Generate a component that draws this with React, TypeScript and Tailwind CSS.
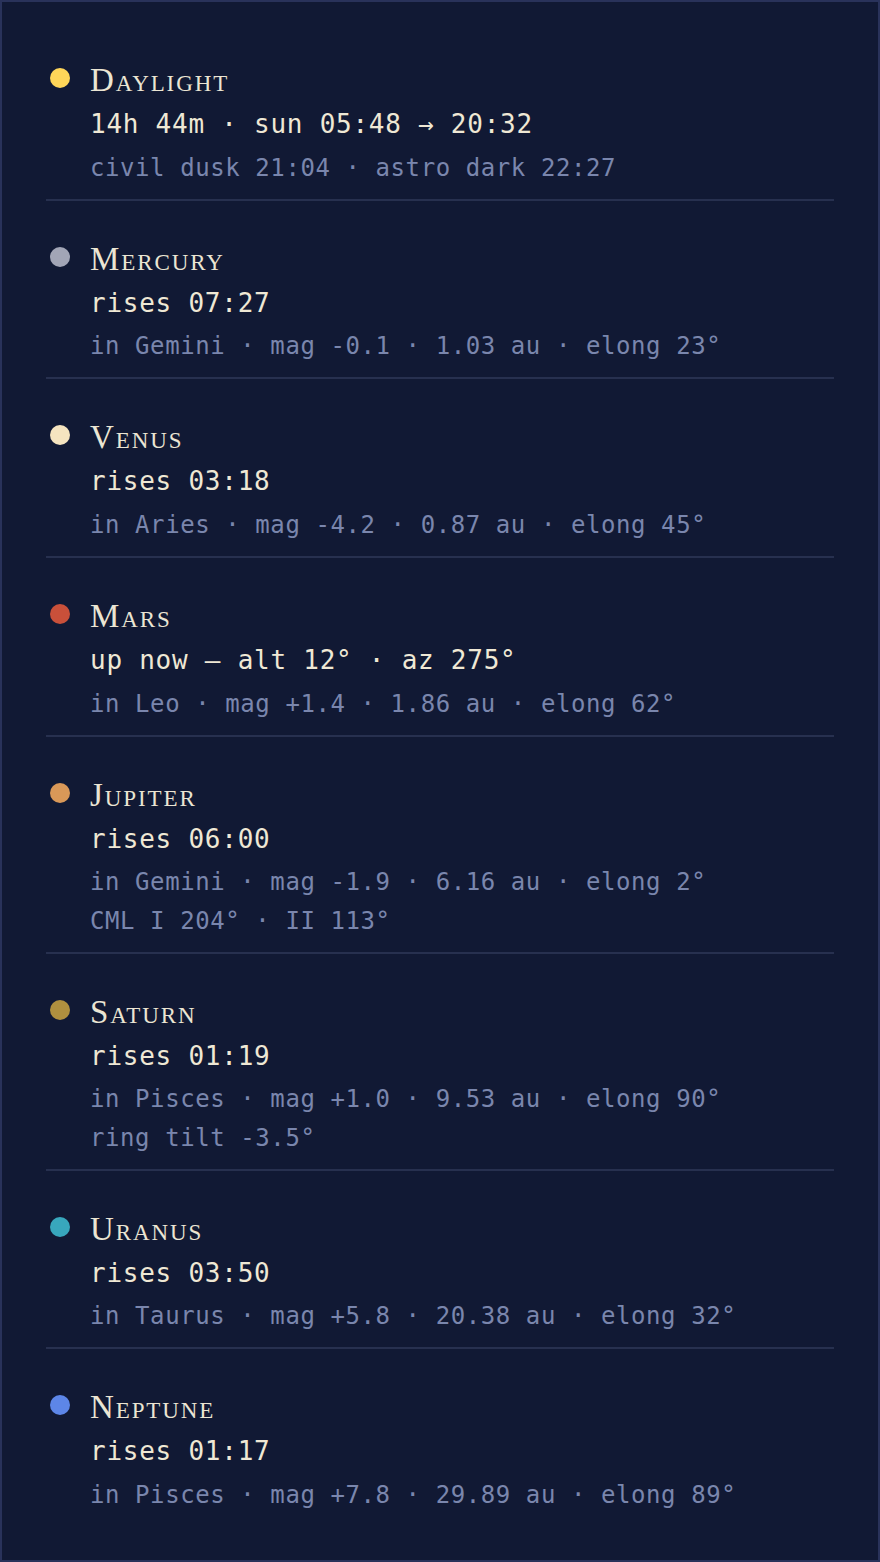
import React from "react";

type Item = {
  name: string;
  dot: string;
  primary: string;
  secondary: string[];
};

const items: Item[] = [
  {
    name: "Daylight",
    dot: "bg-[#ffd659]",
    primary: "14h 44m · sun 05:48 → 20:32",
    secondary: ["civil dusk 21:04 · astro dark 22:27"],
  },
  {
    name: "Mercury",
    dot: "bg-[#a2a5b6]",
    primary: "rises 07:27",
    secondary: ["in Gemini · mag -0.1 · 1.03 au · elong 23°"],
  },
  {
    name: "Venus",
    dot: "bg-[#f5e4c0]",
    primary: "rises 03:18",
    secondary: ["in Aries · mag -4.2 · 0.87 au · elong 45°"],
  },
  {
    name: "Mars",
    dot: "bg-[#c9503a]",
    primary: "up now — alt 12° · az 275°",
    secondary: ["in Leo · mag +1.4 · 1.86 au · elong 62°"],
  },
  {
    name: "Jupiter",
    dot: "bg-[#d99858]",
    primary: "rises 06:00",
    secondary: ["in Gemini · mag -1.9 · 6.16 au · elong 2°", "CML I 204° · II 113°"],
  },
  {
    name: "Saturn",
    dot: "bg-[#b0903f]",
    primary: "rises 01:19",
    secondary: ["in Pisces · mag +1.0 · 9.53 au · elong 90°", "ring tilt -3.5°"],
  },
  {
    name: "Uranus",
    dot: "bg-[#38a7bd]",
    primary: "rises 03:50",
    secondary: ["in Taurus · mag +5.8 · 20.38 au · elong 32°"],
  },
  {
    name: "Neptune",
    dot: "bg-[#5d86e8]",
    primary: "rises 01:17",
    secondary: ["in Pisces · mag +7.8 · 29.89 au · elong 89°"],
  },
];

export default function App() {
  return (
    <div className="min-h-screen box-border border-2 border-[#29325a] bg-[#111934] px-[44px] pt-[20px]">
      {items.map((it, i) => (
        <div
          key={it.name}
          className={
            "flex pt-[40px] pb-[11.67px] " +
            (i < items.length - 1 ? "border-b-2 border-[#27304f]" : "")
          }
        >
          <div className="w-[44px] shrink-0 pl-[4px] pt-[6px]">
            <div className={"w-[20px] h-[20px] rounded-full " + it.dot} />
          </div>
          <div className="flex flex-col">
            <div className="font-['Liberation_Serif',serif] text-[33px] leading-[36px] [font-variant:small-caps] tracking-[1.9px] text-[#ebe5d3]">
              {it.name}
            </div>
            <div className="mt-[6px] font-['DejaVu_Sans_Mono',monospace] text-[26px] leading-[41.6px] tracking-[0.75px] text-[#efe8d5] whitespace-pre">
              {it.primary}
            </div>
            <div className="mt-[3px] flex flex-col">
              {it.secondary.map((s) => (
                <div
                  key={s}
                  className="font-['DejaVu_Sans_Mono',monospace] text-[24px] leading-[38.4px] tracking-[0.58px] text-[#7a86ad] whitespace-pre"
                >
                  {s}
                </div>
              ))}
            </div>
          </div>
        </div>
      ))}
    </div>
  );
}
